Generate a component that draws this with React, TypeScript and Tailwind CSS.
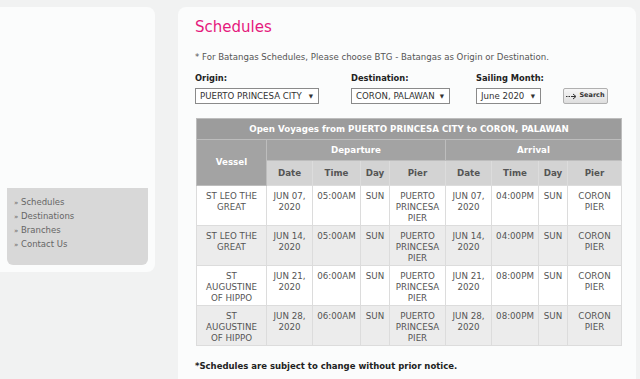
import React from 'react';

const voyages = [
  { vessel: 'ST LEO THE GREAT', date: 'JUN 07, 2020', dep: '05:00AM', arr: '04:00PM' },
  { vessel: 'ST LEO THE GREAT', date: 'JUN 14, 2020', dep: '05:00AM', arr: '04:00PM' },
  { vessel: 'ST AUGUSTINE OF HIPPO', date: 'JUN 21, 2020', dep: '06:00AM', arr: '08:00PM' },
  { vessel: 'ST AUGUSTINE OF HIPPO', date: 'JUN 28, 2020', dep: '06:00AM', arr: '08:00PM' },
];

function FakeSelect({ value, width }: { value: string; width: string }) {
  return (
    <div className={`${width} h-[16px] border border-[#8a8a8a] bg-white flex items-center justify-between pl-[4px] pr-[5px] text-[8.6px] text-[#333]`}>
      <span>{value}</span>
      <span className="text-[5.5px]">▼</span>
    </div>
  );
}

export default function App() {
  const cell = 'border border-[#dcdcdc] align-top text-center px-[4px] pt-[5px]';
  return (
    <div
      className="w-[640px] h-[379px] bg-[#f1f2f2] flex overflow-hidden text-[#555]"
      style={{ fontFamily: '"DejaVu Sans", Verdana, sans-serif' }}
    >
      {/* Sidebar */}
      <aside className="mt-[7px] w-[155px] h-[265px] bg-[#fbfcfc] rounded-r-lg flex flex-col justify-end px-[7px] pb-[7px]">
        <ul className="h-[77px] bg-[#d8d8d8] rounded-b-md pt-[7px] pl-[7px] text-[8.5px] text-[#666]">
          {['Schedules', 'Destinations', 'Branches', 'Contact Us'].map((l) => (
            <li key={l} className="h-[14px] leading-[14px] overflow-hidden">
              <span className="text-[7px]">»</span> {l}
            </li>
          ))}
        </ul>
      </aside>

      {/* Main */}
      <main className="ml-[23px] mt-[7px] w-[458px] bg-[#fbfcfc] rounded-t-lg pl-[17px] pt-[10px]">
        <h1 className="text-[15px] leading-[20px] text-[#e5197d]">Schedules</h1>
        <p className="mt-[15px] text-[8.6px] leading-[10px]">
          * For Batangas Schedules, Please choose BTG - Batangas as Origin or Destination.
        </p>

        <div className="mt-[11px] flex items-end">
          <div className="w-[156px]">
            <div className="text-[8.3px] font-bold text-[#222] leading-[10px] mb-[5px]">Origin:</div>
            <FakeSelect value="PUERTO PRINCESA CITY" width="w-[124px]" />
          </div>
          <div className="w-[125px]">
            <div className="text-[8.3px] font-bold text-[#222] leading-[10px] mb-[5px]">Destination:</div>
            <FakeSelect value="CORON, PALAWAN" width="w-[99px]" />
          </div>
          <div className="w-[87px]">
            <div className="text-[8.3px] font-bold text-[#222] leading-[10px] mb-[5px]">Sailing Month:</div>
            <FakeSelect value="June 2020" width="w-[65px]" />
          </div>
          <button className="w-[45px] h-[16px] border border-[#b0b0b0] rounded-[2px] bg-gradient-to-b from-[#f6f6f6] to-[#dedede] flex items-center justify-center gap-[2px] text-[6.5px] font-bold text-[#333]">
            <svg width="11" height="7" viewBox="0 0 11 7">
              <path d="M0 3.5h1.5M2.5 3.5h1.5M5 3.5h4.5" stroke="#333" strokeWidth="1" />
              <path d="M7 1l3 2.5-3 2.5" stroke="#333" strokeWidth="1" fill="none" />
            </svg>
            Search
          </button>
        </div>

        <table className="mt-[14px] ml-[1px] w-[425px] border-collapse text-[8.7px] leading-[11px] text-[#555] table-fixed">
          <colgroup>
            <col className="w-[70px]" />
            <col className="w-[46px]" />
            <col className="w-[48px]" />
            <col className="w-[29px]" />
            <col className="w-[56px]" />
            <col className="w-[46px]" />
            <col className="w-[47px]" />
            <col className="w-[29px]" />
            <col className="w-[54px]" />
          </colgroup>
          <thead>
            <tr className="h-[21px] bg-[#9c9c9c] text-white font-bold">
              <th colSpan={9} className="border border-[#bdbdbd]">
                Open Voyages from PUERTO PRINCESA CITY to CORON, PALAWAN
              </th>
            </tr>
            <tr className="h-[21px] bg-[#a3a3a3] text-white font-bold">
              <th rowSpan={2} className="border border-[#bdbdbd]">Vessel</th>
              <th colSpan={4} className="border border-[#bdbdbd]">Departure</th>
              <th colSpan={4} className="border border-[#bdbdbd]">Arrival</th>
            </tr>
            <tr className="h-[25px] bg-[#d3d3d3] text-[#555] font-bold">
              {['Date', 'Time', 'Day', 'Pier', 'Date', 'Time', 'Day', 'Pier'].map((h, i) => (
                <th key={i} className="border border-[#dcdcdc]">{h}</th>
              ))}
            </tr>
          </thead>
          <tbody>
            {voyages.map((v, i) => (
              <tr key={i} className={`h-[40px] ${i % 2 === 1 ? 'bg-[#ececec]' : 'bg-white'}`}>
                <td className={cell}>{v.vessel}</td>
                <td className={cell}>{v.date}</td>
                <td className={cell}>{v.dep}</td>
                <td className={cell}>SUN</td>
                <td className={cell}>PUERTO PRINCESA PIER</td>
                <td className={cell}>{v.date}</td>
                <td className={cell}>{v.arr}</td>
                <td className={cell}>SUN</td>
                <td className={cell}>CORON PIER</td>
              </tr>
            ))}
          </tbody>
        </table>

        <p className="mt-[14px] text-[8.5px] font-bold text-[#222]">
          *Schedules are subject to change without prior notice.
        </p>
      </main>
    </div>
  );
}
